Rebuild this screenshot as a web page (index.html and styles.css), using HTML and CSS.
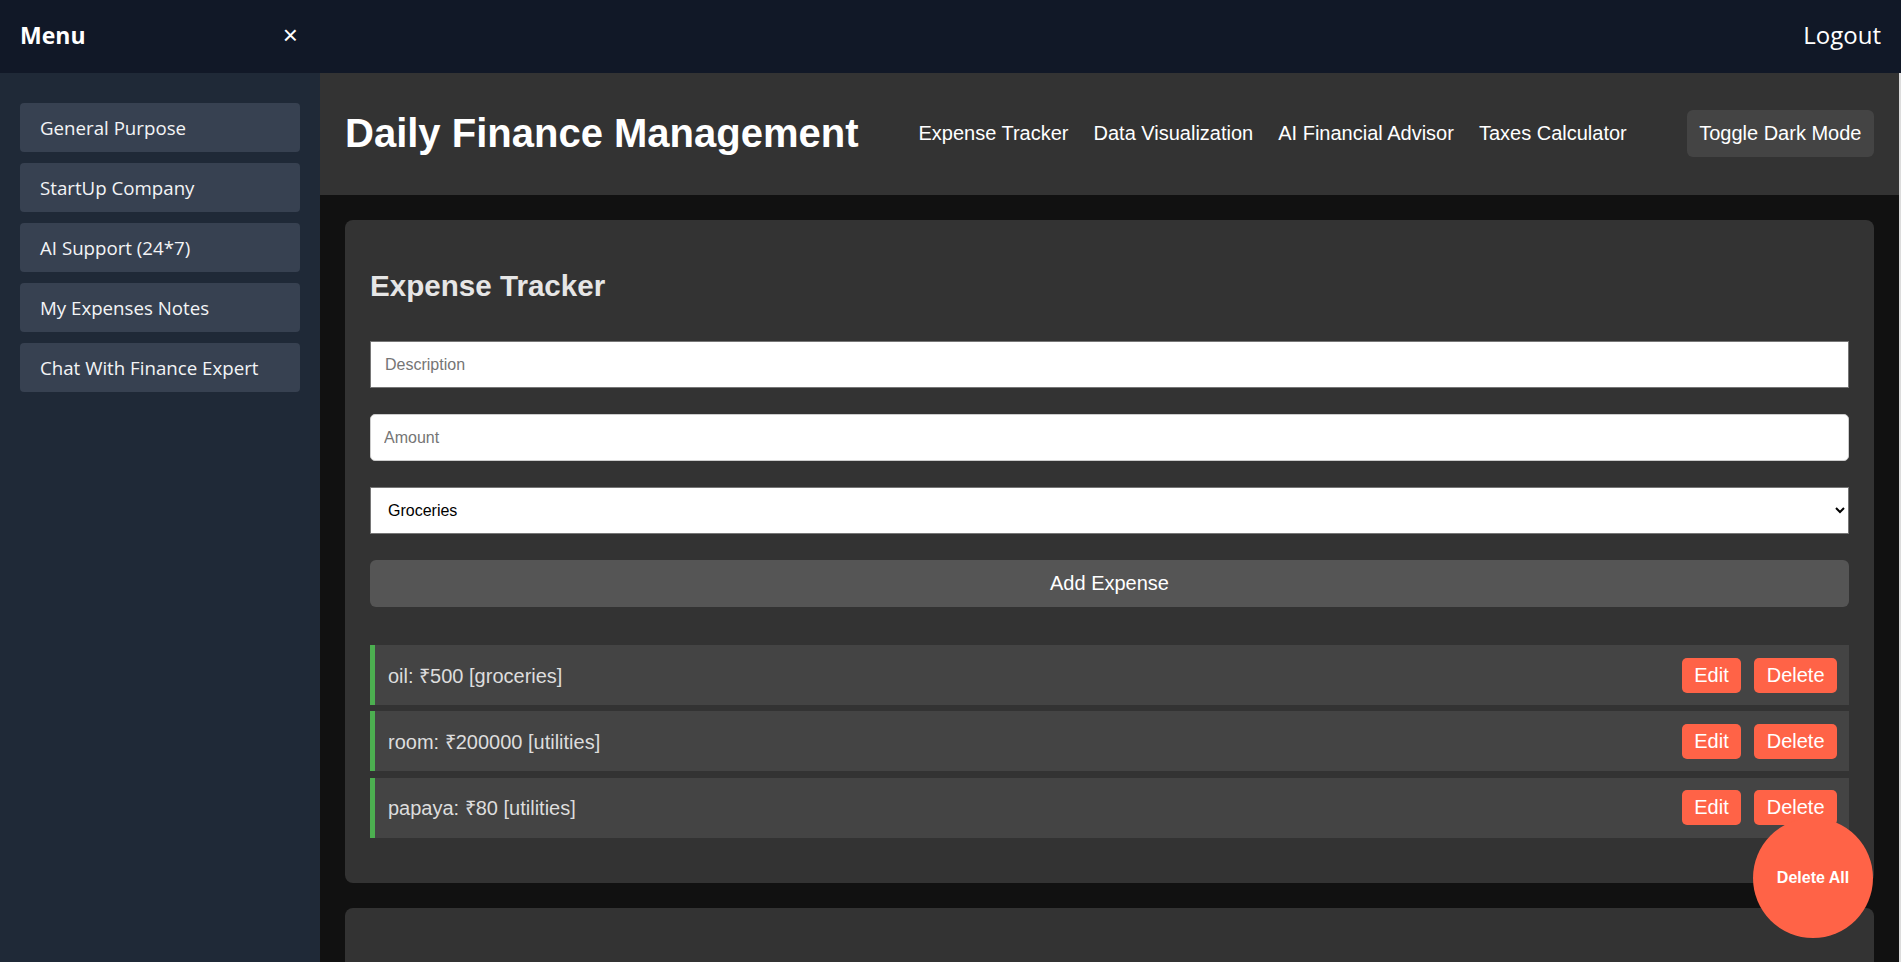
FILE: index.html
```html
<!DOCTYPE html>
<html lang="en">
<head>
<meta charset="utf-8">
<title>Daily Finance Management</title>
<link rel="stylesheet" href="styles.css">
</head>
<body>
<div class="app">
  <aside class="sidebar">
    <div class="sidebar-head">
      <span class="menu-title">Menu</span>
      <button class="close-btn" type="button">&times;</button>
    </div>
    <nav class="side-nav">
      <a class="side-item" href="#">General Purpose</a>
      <a class="side-item" href="#">StartUp Company</a>
      <a class="side-item" href="#">AI Support (24*7)</a>
      <a class="side-item" href="#">My Expenses Notes</a>
      <a class="side-item" href="#">Chat With Finance Expert</a>
    </nav>
  </aside>
  <div class="right">
    <div class="topbar">
      <a class="logout" href="#">Logout</a>
    </div>
    <main class="main">
      <header class="header">
        <h1 class="title">Daily Finance Management</h1>
        <nav class="top-nav">
          <a href="#">Expense Tracker</a>
          <a href="#">Data Visualization</a>
          <a href="#">AI Financial Advisor</a>
          <a href="#">Taxes Calculator</a>
        </nav>
        <button class="toggle" type="button">Toggle Dark Mode</button>
      </header>
      <div class="content">
        <section class="card">
          <h2 class="card-title">Expense Tracker</h2>
          <div class="form">
            <input class="field field-desc" type="text" placeholder="Description">
            <input class="field field-amount" type="number" placeholder="Amount">
            <select class="field field-select">
              <option>Groceries</option>
              <option>Utilities</option>
              <option>Entertainment</option>
            </select>
            <button class="add-btn" type="button">Add Expense</button>
          </div>
          <ul class="list">
            <li class="item">
              <span class="item-text">oil: ₹500 [groceries]</span>
              <span class="actions"><button class="act" type="button">Edit</button><button class="act" type="button">Delete</button></span>
            </li>
            <li class="item">
              <span class="item-text">room: ₹200000 [utilities]</span>
              <span class="actions"><button class="act" type="button">Edit</button><button class="act" type="button">Delete</button></span>
            </li>
            <li class="item">
              <span class="item-text">papaya: ₹80 [utilities]</span>
              <span class="actions"><button class="act" type="button">Edit</button><button class="act" type="button">Delete</button></span>
            </li>
          </ul>
        </section>
        <section class="card card-next"></section>
      </div>
    </main>
  </div>
</div>
<button class="delete-all" type="button">Delete All</button>
</body>
</html>
```

FILE: styles.css
```css
html, body {
  margin: 0;
  padding: 0;
  height: 100%;
  overflow: hidden;
}
body {
  font-family: "Liberation Sans", Arial, sans-serif;
  background: #111;
}
.app {
  display: flex;
  height: 962px;
}
.sidebar {
  width: 320px;
  flex: 0 0 320px;
  background: #1f2937;
  display: flex;
  flex-direction: column;
  font-family: "Open Sans", "Noto Sans", sans-serif;
}
.sidebar-head {
  height: 73px;
  background: #111827;
  display: flex;
  align-items: center;
  justify-content: space-between;
  padding: 0 20px 3px 20px;
  box-sizing: border-box;
}
.menu-title {
  color: #fff;
  font-size: 23px;
  font-weight: 700;
}
.close-btn {
  background: none;
  border: none;
  color: #fff;
  font-size: 26px;
  line-height: 1;
  padding: 0;
  margin-right: 2px;
  font-family: "Liberation Sans", Arial, sans-serif;
  cursor: pointer;
}
.side-nav {
  display: flex;
  flex-direction: column;
  gap: 11px;
  padding: 30px 20px;
}
.side-item {
  display: flex;
  align-items: center;
  height: 49px;
  padding: 0 20px;
  box-sizing: border-box;
  background: #374151;
  border-radius: 4px;
  color: #f3f4f6;
  text-decoration: none;
  font-size: 18.7px;
}
.right {
  flex: 1;
  display: flex;
  flex-direction: column;
  background: #dcdcdc;
  min-width: 0;
}
.topbar {
  height: 73px;
  flex: 0 0 73px;
  box-sizing: border-box;
  background: #111827;
  display: flex;
  align-items: center;
  justify-content: flex-end;
  padding: 0 20px 5px;
}
.logout {
  color: #fff;
  text-decoration: none;
  font-family: "Open Sans", "Noto Sans", sans-serif;
  font-size: 24px;
}
.main {
  flex: 1;
  margin-right: 2px;
  background: #111;
  display: flex;
  flex-direction: column;
  min-height: 0;
}
.header {
  height: 122px;
  flex: 0 0 122px;
  box-sizing: border-box;
  background: #333;
  display: flex;
  align-items: center;
  justify-content: space-between;
  padding: 0 25px 2px;
}
.title {
  margin: 0;
  color: #fff;
  font-size: 40px;
  font-weight: 700;
}
.top-nav {
  display: flex;
  gap: 25px;
}
.top-nav a {
  color: #fff;
  text-decoration: none;
  font-size: 20px;
}
.toggle {
  background: #444;
  color: #fff;
  border: none;
  border-radius: 6px;
  font-family: "Liberation Sans", Arial, sans-serif;
  font-size: 20px;
  height: 47px;
  padding: 0 12.5px;
}
.content {
  padding: 25px;
  display: flex;
  flex-direction: column;
  gap: 25px;
}
.card {
  background: #333;
  border-radius: 8px;
  padding: 25px;
}
.card-title {
  margin: 24px 0 38px;
  color: #e6e6e6;
  font-size: 29.6px;
  font-weight: 700;
}
.form {
  display: flex;
  flex-direction: column;
  gap: 26px;
}
.field {
  height: 47px;
  box-sizing: border-box;
  width: 100%;
  background: #fff;
  font-family: "Liberation Sans", Arial, sans-serif;
  font-size: 16px;
  color: #000;
  margin: 0;
}
.field::placeholder {
  color: #757575;
}
.field-desc {
  border: 1px solid #767676;
  border-radius: 0;
  padding: 0 14px;
}
.field-amount {
  border: 1px solid #ccc;
  border-radius: 5px;
  padding: 0 13px;
}
.field-select {
  border: 1px solid #767676;
  border-radius: 0;
  padding: 0 13px;
}
.add-btn {
  height: 47px;
  background: #555;
  color: #fff;
  border: none;
  border-radius: 6px;
  font-family: "Liberation Sans", Arial, sans-serif;
  font-size: 20px;
}
.list {
  list-style: none;
  margin: 38px 0 20px;
  padding: 0;
  display: flex;
  flex-direction: column;
  gap: 6.3px;
}
.item {
  height: 60px;
  box-sizing: border-box;
  background: #444;
  border-left: 5px solid #4caf50;
  padding: 0 12px 0 13px;
  display: flex;
  align-items: center;
  justify-content: space-between;
  color: #ddd;
  font-size: 20px;
}
.actions {
  display: flex;
  gap: 13px;
}
.act {
  background: #ff6347;
  color: #fff;
  border: none;
  border-radius: 5px;
  font-family: "Liberation Sans", Arial, sans-serif;
  font-size: 20px;
  height: 35px;
  padding: 0 12.5px;
}
.card-next {
  height: 300px;
}
.delete-all {
  position: fixed;
  right: 28px;
  bottom: 24px;
  width: 120px;
  height: 120px;
  border-radius: 50%;
  background: #ff6347;
  color: #fff;
  border: none;
  font-family: "Liberation Sans", Arial, sans-serif;
  font-size: 16px;
  font-weight: 700;
  padding: 0;
}
```
